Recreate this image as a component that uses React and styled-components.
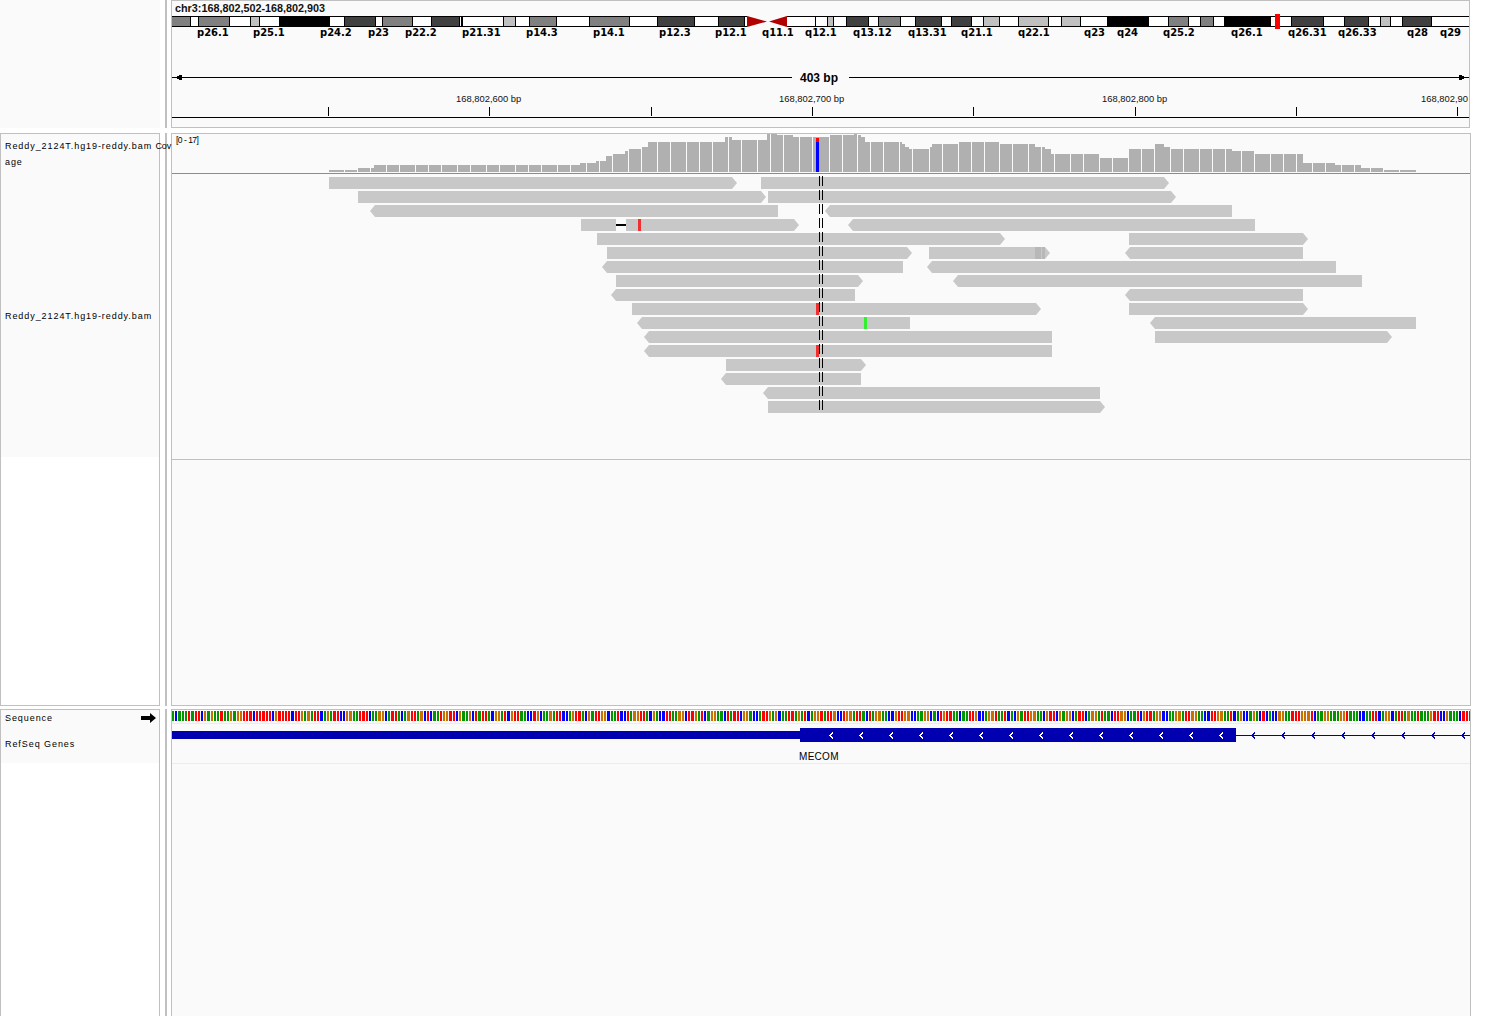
import React from "react";
import styled, { createGlobalStyle } from "styled-components";

const BORDER = "#c0c0c0";
const PANEL = "#fafafa";

const GlobalStyle = createGlobalStyle`
  html, body {
    margin: 0;
    height: 1016px;
    overflow: hidden;
    background: #fff;
  }
`;

const Page = styled.div`
  display: flex;
  flex-direction: column;
  gap: 5px;
  width: 1489px;
  height: 1016px;
  overflow: hidden;
`;

const Row = styled.div`
  display: flex;
  flex: none;
  height: ${(props) => props.height}px;
  margin-top: ${(props) => props.pull || 0}px;
`;

const NamePanel = styled.div`
  flex: none;
  box-sizing: border-box;
  display: flex;
  flex-direction: column;
  width: 160px;
  background: ${(props) => (props.bare ? PANEL : "#fff")};
  border: ${(props) => (props.bare ? "none" : `1px solid ${BORDER}`)};
`;

const NameSection = styled.div`
  flex: none;
  box-sizing: border-box;
  display: flex;
  flex-direction: column;
  justify-content: ${(props) => (props.center ? "center" : "flex-start")};
  height: ${(props) => props.height}px;
  padding: ${(props) => props.top || 0}px 0 0 4px;
  background: ${PANEL};
`;

const TrackName = styled.div`
  display: flex;
  justify-content: space-between;
  align-items: center;
  flex: none;
  width: 151px;
  height: 16px;
  margin-top: ${(props) => props.gap || 0}px;
  font: 9px/16px "Liberation Sans", Arial, sans-serif;
  letter-spacing: 0.93px;
  white-space: pre;
  color: #000;
  position: relative;
  z-index: 1;
`;

const NameTail = styled.span`
  letter-spacing: -0.2px;
`;

const Stripe = styled.div`
  flex: none;
  width: 2px;
  margin: 0 4px 0 5px;
  background: ${BORDER};
`;

const DataPanel = styled.div`
  flex: none;
  box-sizing: border-box;
  display: flex;
  flex-direction: column;
  width: ${(props) => props.width}px;
  background: ${PANEL};
  border: 1px solid ${BORDER};
  overflow: hidden;
`;

const LocusLabel = styled.div`
  flex: none;
  height: 13px;
  padding-left: 3px;
  font: bold 10.8px/14px "Liberation Sans", Arial, sans-serif;
  color: #111;
`;

const Canvas = styled.svg`
  display: block;
  flex: none;
  shape-rendering: crispEdges;
`;

const BandLabel = styled.text`
  font: bold 10px "DejaVu Sans", sans-serif;
  fill: #000;
`;

const SpanLabel = styled.text`
  font: bold 12px "Liberation Sans", Arial, sans-serif;
  fill: #000;
`;

const TickLabel = styled.text`
  font: 9.4px "Liberation Sans", Arial, sans-serif;
  fill: #111;
`;

const RangeLabel = styled.text`
  font: 8.5px "Liberation Sans", Arial, sans-serif;
  letter-spacing: -0.5px;
  fill: #000;
`;

const GeneLabel = styled.text`
  font: 10px "Liberation Sans", Arial, sans-serif;
  letter-spacing: 0.3px;
  fill: #000;
`;

const TrackEdge = styled.div`
  flex: none;
  height: 1px;
  background: ${(props) => props.color};
`;

// x end + shade of each ideogram band, left to right
const bandShade = { w: "#fff", g: "#808080", l: "#c0c0c0", d: "#404040", k: "#000" };
const pArm = [
  [190, "g"], [198, "w"], [229, "g"], [250, "w"], [259, "l"], [279, "w"], [329, "k"], [344, "w"],
  [375, "d"], [382, "w"], [412, "g"], [431, "w"], [459, "d"], [461, "w"], [462, "k"], [503, "w"],
  [515, "l"], [529, "w"], [556, "g"], [589, "w"], [629, "g"], [657, "w"], [694, "d"], [718, "w"],
  [744, "d"], [747, "w"],
];
const qArm = [
  [815, "w"], [827, "w"], [833, "l"], [846, "w"], [868, "d"], [878, "w"], [900, "g"], [915, "w"],
  [941, "d"], [951, "w"], [971, "d"], [983, "w"], [999, "l"], [1018, "w"], [1048, "l"], [1061, "w"],
  [1080, "l"], [1107, "w"], [1148, "k"], [1168, "w"], [1188, "g"], [1200, "w"], [1213, "g"], [1224, "w"],
  [1270, "k"], [1291, "w"], [1323, "d"], [1344, "w"], [1368, "d"], [1380, "w"], [1390, "l"], [1402, "w"],
  [1431, "d"], [1469, "w"],
];
const bandLabels = [
  ["p26.1", 197], ["p25.1", 253], ["p24.2", 320], ["p23", 368], ["p22.2", 405], ["p21.31", 462],
  ["p14.3", 526], ["p14.1", 593], ["p12.3", 659], ["p12.1", 715], ["q11.1", 762], ["q12.1", 805],
  ["q13.12", 853], ["q13.31", 908], ["q21.1", 961], ["q22.1", 1018], ["q23", 1084], ["q24", 1117],
  ["q25.2", 1163], ["q26.1", 1231], ["q26.31", 1288], ["q26.33", 1338], ["q28", 1407], ["q29", 1440],
];

const Arm = ({ bands, start }) => {
  let prev = start;
  return bands.map(([end, shade]) => {
    const band = (
      <g key={end}>
        <rect x={prev} y={16} width={end - prev} height={10} fill={bandShade[shade]} />
        <rect x={prev} y={16} width={1} height={10} fill="#000" opacity={prev === start ? 0 : 1} />
      </g>
    );
    prev = end;
    return band;
  });
};

const Ideogram = () => (
  <Canvas width={1297} height={26} viewBox="172 14 1297 26">
    <Arm bands={pArm} start={172} />
    <Arm bands={qArm} start={787} />
    <rect x={172} y={16} width={575} height={1} fill="#000" />
    <rect x={172} y={26} width={575} height={1} fill="#000" />
    <rect x={787} y={16} width={682} height={1} fill="#000" />
    <rect x={787} y={26} width={682} height={1} fill="#000" />
    <polygon points="747,16 767,21.5 747,27" fill="#b00000" shapeRendering="auto" />
    <polygon points="787,16 769,21.5 787,27" fill="#b00000" shapeRendering="auto" />
    <rect x={1275} y={14} width={5} height={15} fill="#f00" />
    {bandLabels.map(([name, x]) => (
      <BandLabel key={name} x={x} y={36}>{name}</BandLabel>
    ))}
  </Canvas>
);

const rulerTicks = [328, 489, 651, 812, 973, 1135, 1296, 1457];
const rulerLabels = [
  ["168,802,600 bp", 456],
  ["168,802,700 bp", 779],
  ["168,802,800 bp", 1102],
  ["168,802,90", 1421],
];

const Ruler = () => (
  <Canvas width={1297} height={87} viewBox="172 40 1297 87">
    <rect x={172} y={77} width={620} height={1} fill="#000" />
    <rect x={849} y={77} width={620} height={1} fill="#000" />
    <polygon points="174,77.5 182,74.5 182,80.5" fill="#000" />
    <polygon points="1467,77.5 1459,74.5 1459,80.5" fill="#000" />
    <SpanLabel x={800} y={82}>403 bp</SpanLabel>
    {rulerLabels.map(([text, x]) => (
      <TickLabel key={text} x={x} y={102}>{text}</TickLabel>
    ))}
    {rulerTicks.map((x) => (
      <rect key={x} x={x} y={107} width={1} height={9} fill="#000" />
    ))}
    <rect x={172} y={117} width={1297} height={1} fill="#000" />
  </Canvas>
);

// [from, to, height] read off the coverage profile
const coverage = [
  [329, 358, 2], [358, 374, 4], [374, 580, 7], [580, 596, 9], [596, 606, 11], [606, 613, 16],
  [613, 625, 18], [625, 629, 21], [629, 642, 23], [642, 648, 25], [648, 725, 30], [725, 732, 35],
  [732, 767, 32], [767, 777, 38], [777, 793, 37], [793, 829, 35], [829, 854, 37], [854, 857, 38],
  [857, 861, 37], [861, 865, 35], [865, 902, 30], [902, 905, 28], [905, 909, 25], [909, 929, 23],
  [929, 932, 25], [932, 958, 28], [958, 1000, 30], [1000, 1035, 28], [1035, 1045, 25], [1045, 1051, 23],
  [1051, 1100, 18], [1100, 1129, 14], [1129, 1155, 23], [1155, 1164, 28], [1164, 1171, 25], [1171, 1232, 23],
  [1232, 1254, 21], [1254, 1303, 18], [1303, 1335, 9], [1335, 1361, 7], [1361, 1384, 4], [1384, 1416, 2],
];
const coverageGaps = [
  344, 357, 370, 386, 399, 415, 428, 441, 457, 470, 486, 499, 515, 528, 541, 557, 570, 586, 599, 612,
  628, 641, 657, 670, 686, 699, 712, 728, 741, 757, 770, 783, 799, 812, 829, 842, 857, 870, 883, 899,
  912, 929, 942, 958, 971, 984, 999, 1012, 1028, 1041, 1054, 1070, 1083, 1099, 1112, 1128, 1141, 1154,
  1170, 1183, 1199, 1212, 1225, 1241, 1254, 1270, 1283, 1296, 1312, 1325, 1341, 1354, 1370, 1383, 1399,
];

const CoverageTrack = () => (
  <Canvas width={1298} height={40} viewBox="172 134 1298 40">
    <RangeLabel x={176} y={143}>[0 - 17]</RangeLabel>
    {coverage.map(([from, to, h]) => (
      <rect key={from} x={from} y={172 - h} width={to - from} height={h} fill="#b0b0b0" />
    ))}
    {coverageGaps.map((x) => (
      <rect key={x} x={x} y={130} width={1} height={42} fill={PANEL} />
    ))}
    <rect x={816} y={138} width={3} height={4} fill="#f00" />
    <rect x={816} y={142} width={3} height={30} fill="#00f" />
    <rect x={172} y={173} width={1298} height={1} fill="#8c8c8c" />
  </Canvas>
);

// each lane: [from, to, pointed end]
const lanes = [
  [[329, 737, "r"], [761, 1169, "r"]],
  [[358, 766, "r"], [768, 1176, "r"]],
  [[370, 778, "l"], [825, 1232, "l"]],
  [[581, 616], [626, 799, "r"], [848, 1255, "l"]],
  [[597, 1005, "r"], [1129, 1308, "r"]],
  [[607, 912, "r"], [929, 1050, "r"], [1125, 1303, "l"]],
  [[602, 903, "l"], [927, 1336, "l"]],
  [[616, 863, "r"], [953, 1362, "l"]],
  [[611, 855, "l"], [1125, 1303, "l"]],
  [[632, 1041, "r"], [1129, 1308, "r"]],
  [[637, 910, "l"], [1150, 1416, "l"]],
  [[644, 1052, "l"], [1155, 1392, "r"]],
  [[644, 1052, "l"]],
  [[726, 866, "r"]],
  [[721, 861, "l"]],
  [[763, 1100, "l"]],
  [[768, 1105, "r"]],
];
const laneTop = (lane) => 177 + lane * 14;

const readPoints = (from, to, point, y) => {
  const b = y + 12;
  const m = y + 6;
  if (point === "r") return `${from},${y} ${to - 5},${y} ${to},${m} ${to - 5},${b} ${from},${b}`;
  if (point === "l") return `${from + 5},${y} ${to},${y} ${to},${b} ${from + 5},${b} ${from},${m}`;
  return `${from},${y} ${to},${y} ${to},${b} ${from},${b}`;
};

// [x, lane, colour, width]
const mismatches = [
  [638, 3, "#f03030", 3],
  [816, 9, "#f03030", 3],
  [864, 10, "#30f030", 3],
  [816, 12, "#f03030", 3],
  [1035, 5, "#b8b8b8", 6],
  [1042, 5, "#b8b8b8", 3],
];

const ReadsTrack = () => (
  <Canvas width={1298} height={285} viewBox="172 174 1298 285">
    {lanes.map((reads, lane) =>
      reads.map(([from, to, point]) => (
        <polygon
          key={from}
          points={readPoints(from, to, point, laneTop(lane))}
          fill="#c8c8c8"
          shapeRendering="auto"
        />
      ))
    )}
    <rect x={616} y={224} width={10} height={2} fill="#000" />
    {mismatches.map(([x, lane, color, w]) => (
      <rect key={`${x}-${lane}`} x={x} y={laneTop(lane)} width={w} height={12} fill={color} />
    ))}
    <line x1={819.5} x2={819.5} y1={176} y2={414} stroke="#000" strokeDasharray="10 4" />
    <line x1={822.5} x2={822.5} y1={176} y2={414} stroke="#000" strokeDasharray="10 4" />
  </Canvas>
);

const SEQUENCE =
  "ACAAATATTCGAGAATAAGAGGTTTCTTTTTCGTTTTCTT" +
  "GAGATTCAGATTCCGGAATTTCAAGGCATTACAGTTAGCTCAATGGTTCGAAGCTATTACGGATCGTTAACCTGCAA" +
  "GATTCCAGTTACGATTGGCAATCCTAGGTTACGACCTTAAGGCTTGATCAGGAACTATTCGGACCATTG" +
  "AGCAATTAGATCAGGTATTGCCTGGATTACTAGGAACCGTTGGCCAAGGCACTGTTAACAATTGCCAGGTAATCACGATTGGAACGTTCGAG" +
  "GCATTCAGGATAACTTGGCAATCGTTAGGCCAA" +
  "GGATTGGAACCTTGGAATCAGCCAGACTCACCGGAATTTGGGTCAAGGAAAGGTAAACCAATTCAGGCATTAGAATAAAGTTCCGAAACTTTGG";

const baseColor = { A: "#009600", C: "#0000ff", G: "#c87000", T: "#ff0000" };
const baseX = (i) => Math.round(172 + i * 3.2258);

const SequenceTrack = () => (
  <Canvas width={1298} height={13} viewBox="172 710 1298 13">
    {Array.from(SEQUENCE.slice(0, 403)).map((base, i) => (
      <rect
        key={i}
        x={baseX(i)}
        y={711}
        width={baseX(i + 1) - baseX(i) - 1}
        height={10}
        fill={baseColor[base]}
      />
    ))}
  </Canvas>
);

const chevronsIn = [...Array(14).keys()].map((i) => 830 + i * 30);
const chevronsOut = [...Array(8).keys()].map((i) => 1252 + i * 30);

const GeneTrack = () => (
  <Canvas width={1298} height={39} viewBox="172 724 1298 39">
    <rect x={172} y={731} width={628} height={8} fill="#0000b0" />
    <rect x={800} y={728} width={436} height={14} fill="#0000b0" />
    <rect x={1236} y={735} width={234} height={1} fill="#0000b0" />
    {chevronsIn.map((x) => (
      <polyline key={x} points={`${x + 3},732.5 ${x},735.5 ${x + 3},738.5`} fill="none" stroke="#fff" />
    ))}
    {chevronsOut.map((x) => (
      <polyline key={x} points={`${x + 3},732.5 ${x},735.5 ${x + 3},738.5`} fill="none" stroke="#0000b0" />
    ))}
    <GeneLabel x={799} y={760}>MECOM</GeneLabel>
  </Canvas>
);

const App = () => (
  <>
    <GlobalStyle />
    <Page>
      <Row height={128}>
        <NamePanel bare />
        <Stripe />
        <DataPanel width={1299}>
          <LocusLabel>chr3:168,802,502-168,802,903</LocusLabel>
          <Ideogram />
          <Ruler />
        </DataPanel>
      </Row>
      <Row height={573}>
        <NamePanel>
          <NameSection height={40} top={4}>
            <TrackName>
              <span>Reddy_2124T.hg19-reddy.bam <NameTail>Cov</NameTail></span>
            </TrackName>
            <TrackName>age</TrackName>
          </NameSection>
          <NameSection height={283} center>
            <TrackName>Reddy_2124T.hg19-reddy.bam</TrackName>
          </NameSection>
        </NamePanel>
        <Stripe />
        <DataPanel width={1300}>
          <CoverageTrack />
          <ReadsTrack />
          <TrackEdge color={BORDER} />
        </DataPanel>
      </Row>
      <Row height={320} pull={-2}>
        <NamePanel>
          <NameSection height={53}>
            <TrackName>
              Sequence
              <svg width="15" height="10" viewBox="0 0 15 10">
                <path d="M0 3h9V0l6 5-6 5V7H0z" fill="#000" />
              </svg>
            </TrackName>
            <TrackName gap={10}>RefSeq Genes</TrackName>
          </NameSection>
        </NamePanel>
        <Stripe />
        <DataPanel width={1300}>
          <SequenceTrack />
          <TrackEdge color="#ececec" />
          <GeneTrack />
          <TrackEdge color="#ececec" />
        </DataPanel>
      </Row>
    </Page>
  </>
);

export default App;
